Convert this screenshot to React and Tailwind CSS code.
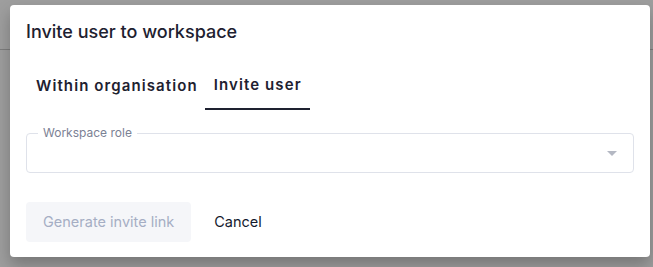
import React from "react";

const App = () => {
  return (
    <div className="w-[653px] h-[267px] bg-[#9e9e9e] relative overflow-hidden" style={{ fontFamily: "Inter, 'Noto Sans', sans-serif" }}>
      {/* backdrop header line */}
      <div className="absolute left-0 right-0 top-[49px] h-px bg-[#7d7d7d]" />

      {/* Dialog */}
      <div className="absolute left-[10px] top-[5px] w-[640px] h-[252px] bg-white rounded-[4px] shadow-[0_8px_16px_rgba(0,0,0,0.25)] flex flex-col px-4">
        <h2 className="mt-[17px] text-[18px] leading-[20px] font-medium text-[#1e2130]">
          Invite user to workspace
        </h2>

        {/* Tabs */}
        <div className="mt-[20px] flex">
          <div className="h-[48px] pl-[10px] pr-[7px] flex items-center text-[15px] font-semibold tracking-[1.1px] text-[#1e2130]">
            Within organisation
          </div>
          <div className="h-[48px] pl-[9px] pr-[8px] flex items-center text-[15px] font-semibold tracking-[1.1px] text-[#1e2130] border-b-2 border-[#1e2130]">
            Invite user
          </div>
        </div>

        {/* Select field */}
        <div className="mt-[23px] relative h-[40px] border border-[#dfe2ea] rounded-[4px] flex items-center justify-end pr-[16px]">
          <span className="absolute left-[11px] -top-[9px] px-[5px] bg-white text-[12px] leading-[16px] text-[#7b8194]">
            Workspace role
          </span>
          <svg width="10" height="5" viewBox="0 0 10 5">
            <path d="M0 0 L10 0 L5 5 Z" fill="#b4b8c3" />
          </svg>
        </div>

        {/* Actions */}
        <div className="mt-[29px] flex items-center gap-[6px]">
          <button className="h-[40px] px-[17px] rounded-[4px] bg-[#f5f6f9] text-[14.5px] text-[#a5aec4]">
            Generate invite link
          </button>
          <button className="h-[40px] px-[17px] text-[14.5px] text-[#141a2e]">
            Cancel
          </button>
        </div>
      </div>
    </div>
  );
};

export default App;
